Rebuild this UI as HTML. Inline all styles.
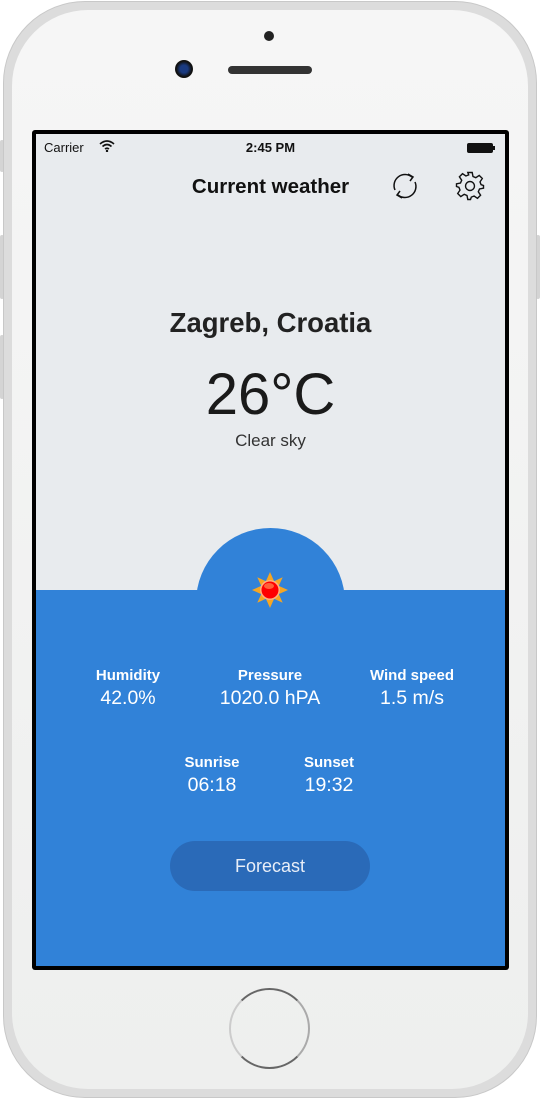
<!DOCTYPE html>
<html><head><meta charset="utf-8"><style>
*{margin:0;padding:0;box-sizing:border-box}
body{width:540px;height:1100px;background:#fff;position:relative;overflow:hidden;font-family:"Liberation Sans",sans-serif}
.btn{position:absolute;background:#d4d4d4;border-radius:2px}
.phone{position:absolute;left:3px;top:1px;width:534px;height:1097px;border-radius:82px;background:#dcdcdc;border:1px solid #c8c8c8}
.inner{position:absolute;left:8px;top:8px;right:8px;bottom:8px;border-radius:76px;background:linear-gradient(#f6f6f6,#eeefee)}
.screen{position:absolute;left:32px;top:130px;width:477px;height:840px;background:#000;border-radius:3px}
.sc{position:absolute;left:36px;top:134px;width:469px;height:832px;background:#e8ebee;overflow:hidden}
.blue{position:absolute;left:0;top:456px;width:100%;height:400px;background:#3182d8}
.dome{position:absolute;left:160px;top:394px;width:149px;height:149px;border-radius:50%;background:#3182d8}
.t{position:absolute;width:100%;text-align:center}
.lab{position:absolute;width:140px;text-align:center;color:#fff}
.lab b{display:block;font-size:15px;font-weight:bold}
.lab span{display:block;font-size:19.5px;margin-top:3px}
</style></head><body>
<div class="btn" style="left:0;top:140px;width:4px;height:32px"></div>
<div class="btn" style="left:0;top:235px;width:4px;height:64px"></div>
<div class="btn" style="left:0;top:335px;width:4px;height:64px"></div>
<div class="btn" style="left:536px;top:235px;width:4px;height:64px"></div>
<div class="phone"><div class="inner"></div></div>
<div style="position:absolute;left:264px;top:31px;width:10px;height:10px;border-radius:50%;background:#222"></div>
<div style="position:absolute;left:175px;top:60px;width:18px;height:18px;border-radius:50%;background:radial-gradient(#1a3a80 30%,#111 60%)"></div>
<div style="position:absolute;left:228px;top:66px;width:84px;height:8px;border-radius:4px;background:#333"></div>
<div style="position:absolute;left:229px;top:988px;width:81px;height:81px;border-radius:50%;border:2px solid #666;border-left-color:#ccc;border-right-color:#aaa"></div>
<div class="screen"></div>
<div class="sc">
 <div style="position:absolute;left:8px;top:6px;font-size:13px;color:#111">Carrier</div>
 <svg style="position:absolute;left:63px;top:6px" width="16" height="12" viewBox="0 0 16 12"><path d="M1 4Q8-2 15 4M3.5 6.5Q8 2.5 12.5 6.5M6 9Q8 7.5 10 9" stroke="#111" stroke-width="1.6" fill="none"/><circle cx="8" cy="11" r="1.2" fill="#111"/></svg>
 <div class="t" style="top:6px;font-size:13px;font-weight:bold;color:#111">2:45 PM</div>
 <div style="position:absolute;left:431px;top:9px;width:26px;height:10px;background:#111;border-radius:2px"></div>
 <div style="position:absolute;left:457px;top:12px;width:2px;height:4px;background:#111"></div>
 <div class="t" style="top:41px;font-size:20.5px;font-weight:bold;color:#111">Current weather</div>
 <svg style="position:absolute;left:354px;top:37px" width="30" height="30" viewBox="0 0 30 30" fill="none" stroke="#111" stroke-width="1.5"><path d="M5 19A11 11 0 0 1 22 6M25 11A11 11 0 0 1 8 24"/><path d="M18 3L23 6L20 10M12 27L7 24L10 20"/></svg>
 <svg style="position:absolute;left:419px;top:37px" width="30" height="30" viewBox="-15 -15 30 30" fill="none" stroke="#111" stroke-width="1.4"><path d="M-2.2-13.5H2.2L3-9.5L5.8-8.3L9.2-10.6L12.3-7.5L10-4.1L11.1-1.3L13.5-0.5V2.2L9.5 3L8.3 5.8L10.6 9.2L7.5 12.3L4.1 10L1.3 11.1L0.5 13.5H-2.2L-3 9.5L-5.8 8.3L-9.2 10.6L-12.3 7.5L-10 4.1L-11.1 1.3L-13.5 0.5V-2.2L-9.5-3L-8.3-5.8L-10.6-9.2L-7.5-12.3L-4.1-10L-1.3-11.1Z"/><circle r="4.5"/></svg>
 <div class="t" style="top:173px;font-size:27.5px;font-weight:bold;color:#222">Zagreb, Croatia</div>
 <div class="t" style="top:227px;font-size:58px;color:#1a1a1a">26°C</div>
 <div class="t" style="top:297px;font-size:17px;color:#333">Clear sky</div>
 <div class="dome"></div>
 <div class="blue"></div>
 <svg style="position:absolute;left:214px;top:436px" width="40" height="40" viewBox="-20 -20 40 40"><g fill="#f5a623"><path d="M0-18L4-9H-4Z"/><path d="M0 18L4 9H-4Z"/><path d="M-18 0L-9 4V-4Z"/><path d="M18 0L9 4V-4Z"/><path d="M-12.7-12.7L-3.5-8.5L-8.5-3.5Z"/><path d="M12.7-12.7L3.5-8.5L8.5-3.5Z"/><path d="M-12.7 12.7L-3.5 8.5L-8.5 3.5Z"/><path d="M12.7 12.7L3.5 8.5L8.5 3.5Z"/></g><circle r="10" fill="#ffb080"/><circle r="8.5" fill="#f00"/><ellipse cx="-1" cy="-4" rx="5" ry="3" fill="#ff8a50" opacity=".7"/></svg>
 <div class="lab" style="left:22px;top:533px"><b>Humidity</b><span>42.0%</span></div>
 <div class="lab" style="left:164px;top:533px"><b>Pressure</b><span>1020.0 hPA</span></div>
 <div class="lab" style="left:306px;top:533px"><b>Wind speed</b><span>1.5 m/s</span></div>
 <div class="lab" style="left:106px;top:620px"><b>Sunrise</b><span>06:18</span></div>
 <div class="lab" style="left:223px;top:620px"><b>Sunset</b><span>19:32</span></div>
 <div style="position:absolute;left:134px;top:707px;width:200px;height:50px;border-radius:25px;background:#2a6ab8;color:#e8eef8;font-size:18px;text-align:center;line-height:50px">Forecast</div>
</div>
</body></html>
